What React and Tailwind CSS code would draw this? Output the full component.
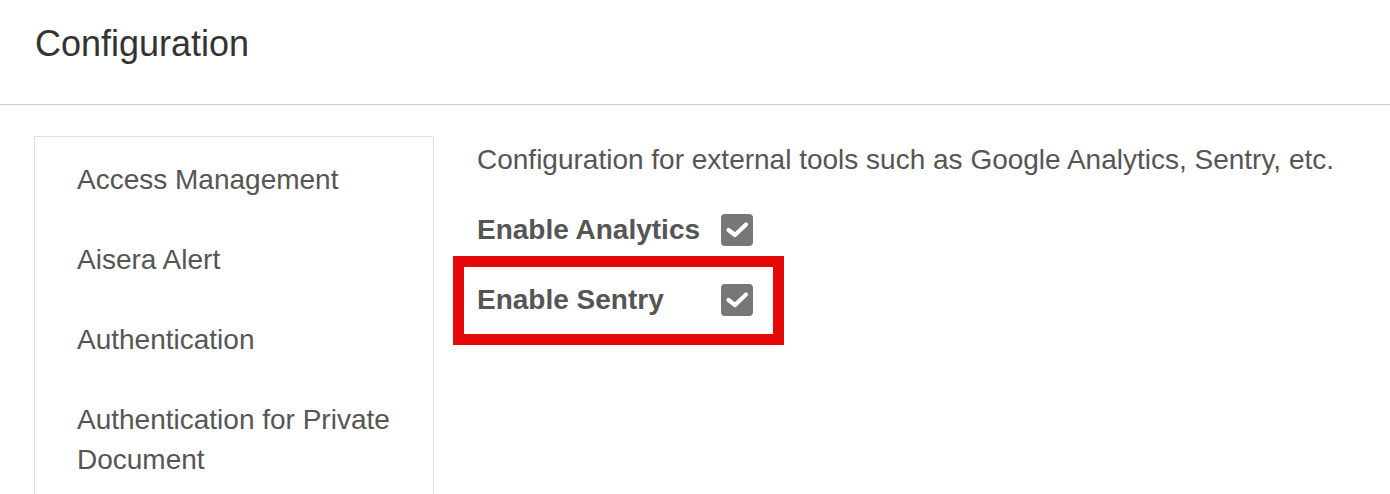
import React, { useState } from 'react';

const menu = ['Access Management', 'Aisera Alert', 'Authentication', 'Authentication for Private Document'];

function CheckBox({ checked, onChange }) {
    return (
        <button
            type="button"
            onClick={onChange}
            className={`w-[32px] h-[32px] rounded-[4px] flex items-center justify-center ${checked ? 'bg-[#777777]' : 'bg-white border-2 border-[#777777]'}`}
        >
            {checked && (
                <svg width="32" height="32" viewBox="0 0 32 32" fill="none">
                    <polyline points="7.5,16 14,21 25,10.5" stroke="white" strokeWidth="4.2" strokeLinecap="round" strokeLinejoin="round" />
                </svg>
            )}
        </button>
    );
}

export default function App() {
    const [analytics, setAnalytics] = useState(true);
    const [sentry, setSentry] = useState(true);

    return (
        <div className="h-[494px] bg-white font-['Liberation_Sans',Arial,sans-serif] overflow-hidden">
            <div className="h-[105px] border-b border-[#cccccc] pl-[35px] pt-[22px]">
                <h1 className="text-[36px] leading-[44px] text-[#333333]">Configuration</h1>
            </div>

            <div className="flex pt-[31px] pl-[34px]">
                <div className="w-[400px] h-[400px] border border-[#e0e0e6] pt-[3px]">
                    {menu.map((item) => (
                        <div key={item} className="pl-[42px] pr-[20px] py-[20px] text-[28px] leading-[40px] text-[#555555]">
                            {item}
                        </div>
                    ))}
                </div>

                <div className="pl-[43px] pt-[4px]">
                    <p className="text-[28px] leading-[40px] text-[#555555]">
                        Configuration for external tools such as Google Analytics, Sentry, etc.
                    </p>

                    <div className="mt-[30px] flex items-center h-[40px]">
                        <span className="w-[244px] text-[28px] font-bold text-[#555555]">Enable Analytics</span>
                        <CheckBox checked={analytics} onChange={() => setAnalytics(!analytics)} />
                    </div>

                    <div className="relative mt-[30px] flex items-center h-[40px]">
                        <span className="w-[244px] text-[28px] font-bold text-[#555555]">Enable Sentry</span>
                        <CheckBox checked={sentry} onChange={() => setSentry(!sentry)} />
                        <div className="absolute left-[-24px] top-[-24px] w-[331px] h-[89px] border-[11px] border-[#e60808] pointer-events-none"></div>
                    </div>
                </div>
            </div>
        </div>
    );
}
